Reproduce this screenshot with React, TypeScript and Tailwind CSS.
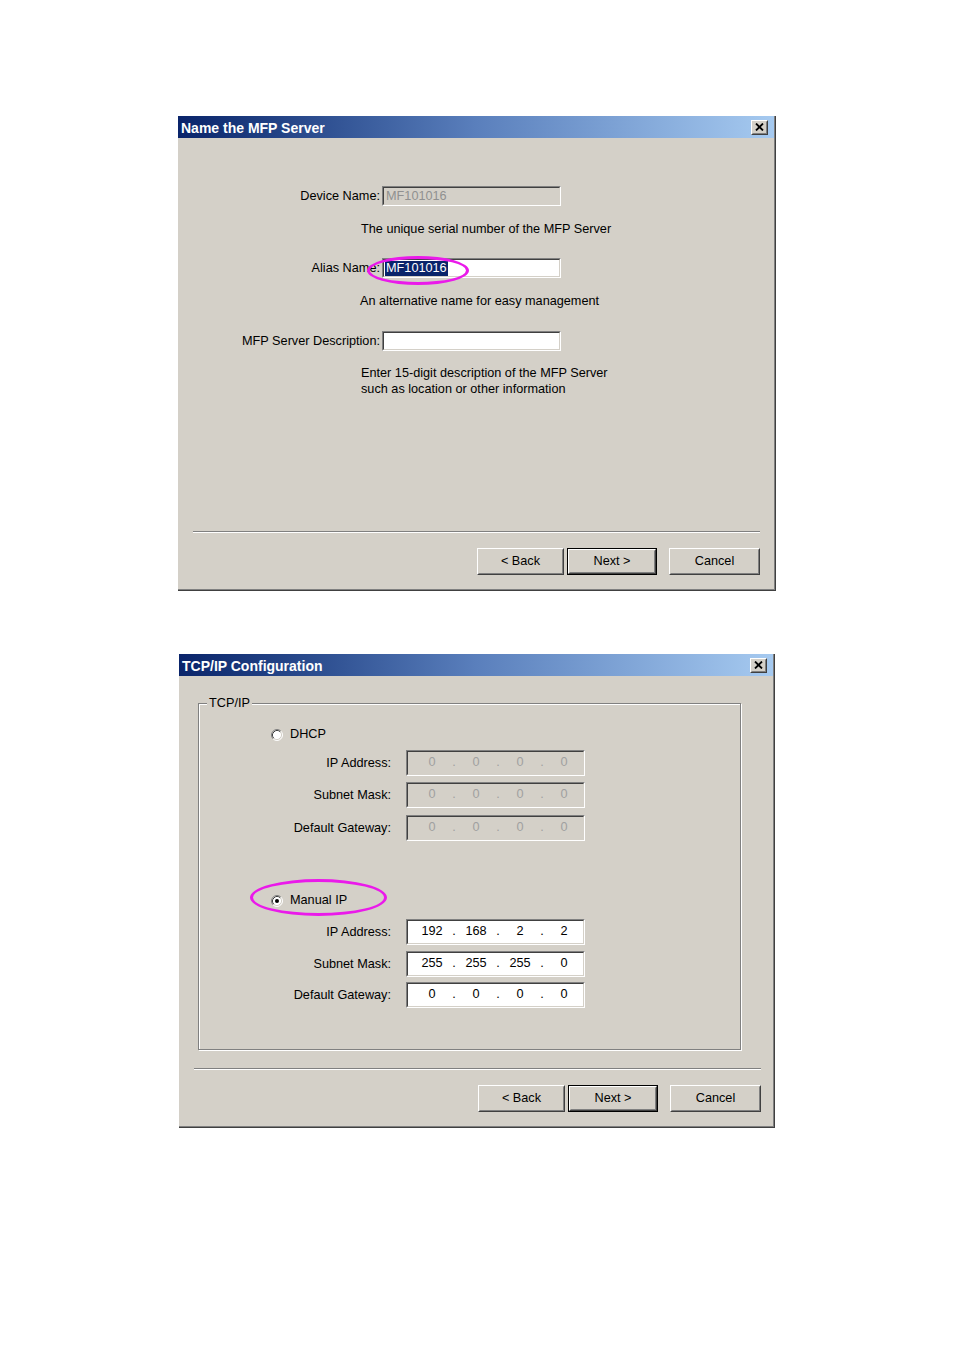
import React from 'react';

const FONT = "font-['Liberation_Sans',Arial,sans-serif]";

function CloseBox() {
  return (
    <div className="mr-[6px] h-[15px] w-[17px] border border-t-white border-l-white border-r-[#404040] border-b-[#404040] bg-[#d4d0c8]">
      <div className="flex h-full w-full items-center justify-center border border-transparent border-r-[#808080] border-b-[#808080]">
        <svg width="9" height="8" viewBox="0 0 9 8">
          <path d="M1 0.5 L8 7.5 M8 0.5 L1 7.5" stroke="#000" strokeWidth="1.8" />
        </svg>
      </div>
    </div>
  );
}

function TitleBar({ title }: { title: string }) {
  return (
    <div className="flex h-[22px] items-center justify-between bg-linear-to-r from-[#0a246a] via-[#5a7fbc] to-[#a6caf0]">
      <span className="pl-[3px] pt-px text-[14px] font-bold leading-none text-white">{title}</span>
      <CloseBox />
    </div>
  );
}

function Button({ label, width, isDefault }: { label: string; width: string; isDefault?: boolean }) {
  return (
    <div className={`h-[27px] ${width} ${isDefault ? 'border border-black' : ''}`}>
      <div className="h-full w-full border border-t-white border-l-white border-r-[#404040] border-b-[#404040]">
        <div className="flex h-full w-full items-center justify-center border border-transparent border-r-[#808080] border-b-[#808080] text-[12.7px] text-black">
          {label}
        </div>
      </div>
    </div>
  );
}

function Footer({ right }: { right: string }) {
  return (
    <div className="mt-auto pb-[14px]">
      <div className="ml-[15px] w-[567px] border-t border-b border-t-[#808080] border-b-white" />
      <div className={`mt-[15px] flex justify-end ${right}`}>
        <Button label="< Back" width="w-[87px]" />
        <div className="w-[3px]" />
        <Button label="Next >" width="w-[90px]" isDefault />
        <div className="w-[12px]" />
        <Button label="Cancel" width="w-[91px]" />
      </div>
    </div>
  );
}

function Sunken({ width, height, disabled, children }: { width: string; height: string; disabled?: boolean; children?: React.ReactNode }) {
  return (
    <div className={`${width} ${height} border border-t-[#808080] border-l-[#808080] border-r-white border-b-white`}>
      <div
        className={`h-full w-full border border-t-[#404040] border-l-[#404040] border-r-[#d4d0c8] border-b-[#d4d0c8] ${
          disabled ? 'bg-[#d4d0c8]' : 'bg-white'
        }`}
      >
        {children}
      </div>
    </div>
  );
}

function FormRow({ label, children }: { label: string; children: React.ReactNode }) {
  return (
    <div className="flex h-[20px] items-center">
      <div className="w-[204px] pr-[2px] pt-[2px] text-right text-[12.7px]">{label}</div>
      {children}
    </div>
  );
}

function Radio({ checked }: { checked?: boolean }) {
  return (
    <svg width="12" height="12" viewBox="0 0 12 12">
      <circle cx="6" cy="6" r="5" fill="#fff" />
      <path d="M2.11 9.89 A5.5 5.5 0 0 1 9.89 2.11" stroke="#808080" fill="none" />
      <path d="M9.89 2.11 A5.5 5.5 0 0 1 2.11 9.89" stroke="#fff" fill="none" />
      <path d="M2.82 9.18 A4.5 4.5 0 0 1 9.18 2.82" stroke="#404040" fill="none" />
      <path d="M9.18 2.82 A4.5 4.5 0 0 1 2.82 9.18" stroke="#d4d0c8" fill="none" />
      {checked && <circle cx="6" cy="6" r="2" fill="#000" />}
    </svg>
  );
}

function IpField({ values, disabled }: { values: string[]; disabled?: boolean }) {
  const color = disabled ? 'text-[#a0a0a0]' : 'text-black';
  return (
    <Sunken width="w-[179px]" height="h-[26px]" disabled={disabled}>
      <div className={`flex pl-[5px] pt-[2px] text-[12.7px] leading-[16px] ${color}`}>
        {values.map((v, i) => (
          <React.Fragment key={i}>
            {i > 0 && <span className="w-[6px] text-center">.</span>}
            <span className="w-[38px] text-center">{v}</span>
          </React.Fragment>
        ))}
      </div>
    </Sunken>
  );
}

function IpRow({ label, values, disabled, className }: { label: string; values: string[]; disabled?: boolean; className: string }) {
  return (
    <div className={`flex items-center ${className}`}>
      <div className="w-[192px] pt-[2px] text-right text-[12.7px]">{label}</div>
      <div className="w-[15px]" />
      <IpField values={values} disabled={disabled} />
    </div>
  );
}

function Ellipse({ className }: { className: string }) {
  return <div className={`pointer-events-none absolute rounded-[50%] border-[3px] border-[#ea1aea] ${className}`} />;
}

function NameDialog() {
  return (
    <div className="relative ml-[178px] mt-[116px] flex h-[475px] w-[598px] flex-col border-r border-b border-[#404040] bg-[#d4d0c8]">
      <div className="flex h-full flex-col border-r border-b border-[#808080]">
        <TitleBar title="Name the MFP Server" />
        <div className="mt-[48px]">
          <FormRow label="Device Name:">
            <Sunken width="w-[179px]" height="h-[20px]" disabled>
              <div className="pl-[2px] text-[12.7px] leading-[17px] text-[#909090]">MF101016</div>
            </Sunken>
          </FormRow>
          <div className="ml-[183px] mt-[15px] text-[12.7px] leading-[16px]">The unique serial number of the MFP Server</div>
          <div className="mt-[21px]">
            <FormRow label="Alias Name:">
              <Sunken width="w-[179px]" height="h-[20px]">
                <div className="flex pl-[1px] pt-[1px]">
                  <span className="inline-block h-[15px] bg-[#0a246a] px-[1px] text-[12.7px] leading-[15px] text-white">MF101016</span>
                </div>
              </Sunken>
            </FormRow>
          </div>
          <div className="ml-[182px] mt-[15px] text-[12.7px] leading-[16px]">An alternative name for easy management</div>
          <div className="mt-[22px]">
            <FormRow label="MFP Server Description:">
              <Sunken width="w-[179px]" height="h-[20px]" />
            </FormRow>
          </div>
          <div className="ml-[183px] mt-[14px] text-[12.7px] leading-[16px]">
            <div>Enter 15-digit description of the MFP Server</div>
            <div>such as location or other information</div>
          </div>
        </div>
        <Footer right="pr-[14px]" />
      </div>
      <Ellipse className="left-[189px] top-[140px] h-[29px] w-[102px]" />
    </div>
  );
}

function TcpDialog() {
  return (
    <div className="relative ml-[179px] mt-[63px] flex h-[474px] w-[596px] flex-col border-r border-b border-[#404040] bg-[#d4d0c8]">
      <div className="flex h-full flex-col border-r border-b border-[#808080]">
        <TitleBar title="TCP/IP Configuration" />
        <fieldset className="ml-[19px] mt-[19px] h-[355px] w-[543px] border border-[#808080] shadow-[inset_1px_1px_0_#fff,1px_1px_0_#fff]">
          <legend className="ml-[8px] bg-[#d4d0c8] px-[2px] text-[12.7px] leading-[16px]">TCP/IP</legend>
          <div className="ml-[72px] mt-[16px] flex h-[16px] items-center">
            <Radio />
            <span className="ml-[7px] text-[12.7px]">DHCP</span>
          </div>
          <IpRow className="mt-[7px]" label="IP Address:" values={['0', '0', '0', '0']} disabled />
          <IpRow className="mt-[6px]" label="Subnet Mask:" values={['0', '0', '0', '0']} disabled />
          <IpRow className="mt-[7px]" label="Default Gateway:" values={['0', '0', '0', '0']} disabled />
          <div className="ml-[72px] mt-[52px] flex h-[16px] items-center">
            <Radio checked />
            <span className="ml-[7px] text-[12.7px]">Manual IP</span>
          </div>
          <IpRow className="mt-[10px]" label="IP Address:" values={['192', '168', '2', '2']} />
          <IpRow className="mt-[6px]" label="Subnet Mask:" values={['255', '255', '255', '0']} />
          <IpRow className="mt-[5px]" label="Default Gateway:" values={['0', '0', '0', '0']} />
        </fieldset>
        <Footer right="pr-[12px]" />
      </div>
      <Ellipse className="left-[71px] top-[225px] h-[37px] w-[137px]" />
    </div>
  );
}

export default function App() {
  return (
    <div className={`h-[1350px] w-[954px] overflow-hidden bg-white pt-px text-black ${FONT}`}>
      <div className="-mt-px">
        <NameDialog />
        <TcpDialog />
      </div>
    </div>
  );
}
